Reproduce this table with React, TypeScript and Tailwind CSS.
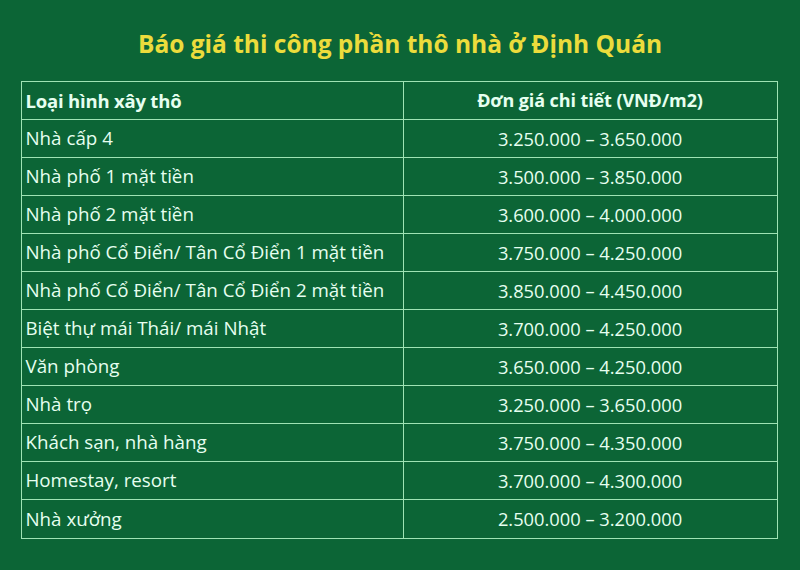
import React from "react";

const rows: [string, string][] = [
  ["Nhà cấp 4", "3.250.000 – 3.650.000"],
  ["Nhà phố 1 mặt tiền", "3.500.000 – 3.850.000"],
  ["Nhà phố 2 mặt tiền", "3.600.000 – 4.000.000"],
  ["Nhà phố Cổ Điển/ Tân Cổ Điển 1 mặt tiền", "3.750.000 – 4.250.000"],
  ["Nhà phố Cổ Điển/ Tân Cổ Điển 2 mặt tiền", "3.850.000 – 4.450.000"],
  ["Biệt thự mái Thái/ mái Nhật", "3.700.000 – 4.250.000"],
  ["Văn phòng", "3.650.000 – 4.250.000"],
  ["Nhà trọ", "3.250.000 – 3.650.000"],
  ["Khách sạn, nhà hàng", "3.750.000 – 4.350.000"],
  ["Homestay, resort", "3.700.000 – 4.300.000"],
  ["Nhà xưởng", "2.500.000 – 3.200.000"],
];

export default function App() {
  return (
    <div
      className="w-[800px] h-[570px] bg-[#0c6536] flex flex-col items-center overflow-hidden"
      style={{ fontFamily: '"Open Sans", "Noto Sans", sans-serif' }}
    >
      <h1 className="mt-[26px] h-[36px] text-[24.5px] leading-[36px] font-bold text-[#ecdc3c] whitespace-nowrap">
        Báo giá thi công phần thô nhà ở Định Quán
      </h1>
      <div className="mt-[19px] ml-[-2px] w-[757px] border border-[#9fe3b4] text-[#e6fff0]">
        <div className="grid grid-cols-[382px_1fr] h-[38px] border-b border-[#9fe3b4]">
          <div className="border-r border-[#9fe3b4] pl-[4px] flex items-center text-[18.5px] font-bold tracking-[-0.2px] whitespace-nowrap">
            Loại hình xây thô
          </div>
          <div className="flex items-center justify-center text-[18px] font-bold tracking-[-0.1px] whitespace-nowrap">
            Đơn giá chi tiết (VNĐ/m2)
          </div>
        </div>
        {rows.map(([a, b], i) => (
          <div
            key={i}
            className={`grid grid-cols-[382px_1fr] h-[38px] ${i < rows.length - 1 ? "border-b border-[#9fe3b4]" : ""}`}
          >
            <div className="border-r border-[#9fe3b4] pl-[4px] flex items-center text-[18.75px] whitespace-nowrap">
              {a}
            </div>
            <div className="flex items-center justify-center text-[18.3px] whitespace-nowrap">
              {b}
            </div>
          </div>
        ))}
      </div>
    </div>
  );
}
